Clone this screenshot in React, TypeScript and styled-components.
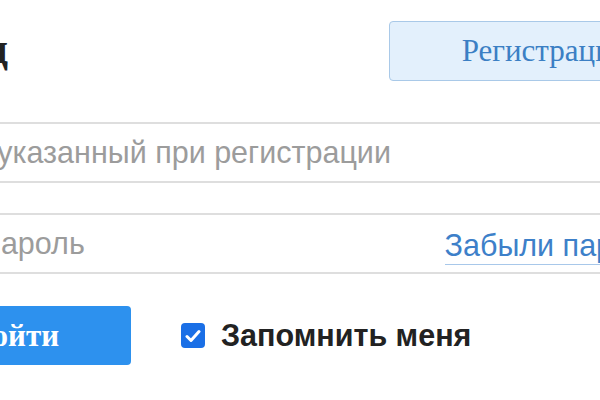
import styled, { createGlobalStyle } from "styled-components";

const GlobalStyle = createGlobalStyle`
  html, body {
    margin: 0;
    padding: 0;
    background: #ffffff;
  }
`;

const Viewport = styled.div`
  width: 600px;
  height: 400px;
  overflow: hidden;
`;

const Form = styled.form`
  width: 809px;
  margin-left: -110px;
  padding-top: 21px;
  display: flex;
  flex-direction: column;
`;

const Header = styled.div`
  display: flex;
  justify-content: space-between;
  align-items: center;
`;

const Title = styled.h1`
  margin: 0 0 6px 26px;
  font-family: "Liberation Serif", serif;
  font-size: 44px;
  font-weight: bold;
  color: #222222;
`;

const RegisterButton = styled.button`
  height: 60px;
  padding: 0 72px;
  background: #e3f0fc;
  border: 1px solid #a9c9e8;
  border-radius: 4px;
  font-family: "Liberation Serif", serif;
  font-size: 31px;
  color: #3b7fc4;
`;

const Field = styled.div<{ $gap: number }>`
  margin-top: ${(p) => p.$gap}px;
  height: 57px;
  display: flex;
  align-items: center;
  border: 2px solid #dedede;
  padding: 0 12px;
`;

const Input = styled.input`
  flex: 1;
  min-width: 0;
  border: none;
  outline: none;
  background: transparent;
  font-family: "Liberation Sans", Arial, sans-serif;
  font-size: 30.5px;
  color: #333333;
  padding: 0;

  &::placeholder {
    color: #9c9c9c;
  }
`;

const ForgotLink = styled.a`
  font-family: "Liberation Sans", Arial, sans-serif;
  font-size: 30.5px;
  color: #3d80c9;
  text-decoration: none;
  white-space: nowrap;
  border-bottom: 1px solid #a8c8ea;
  padding-bottom: 1px;
  margin-top: 6px;
  margin-right: 5px;
`;

const Actions = styled.div`
  margin-top: 32px;
  display: flex;
  align-items: center;
`;

const SubmitButton = styled.button`
  height: 59px;
  width: 241px;
  padding: 0 0 0 10px;
  background: #2d91ee;
  border: none;
  border-radius: 4px;
  font-family: "Liberation Serif", serif;
  font-size: 31px;
  font-weight: bold;
  color: #ffffff;
`;

const Remember = styled.label`
  margin-left: 50px;
  display: flex;
  align-items: center;
  gap: 16px;
  font-family: "Liberation Sans", Arial, sans-serif;
  font-size: 30.5px;
  font-weight: bold;
  color: #222222;
`;

const CheckBox = styled.span`
  width: 24px;
  height: 25px;
  border-radius: 4px;
  background: #1a6fe6;
  display: flex;
  align-items: center;
  justify-content: center;
`;

export default function App() {
  return (
    <>
      <GlobalStyle />
      <Viewport>
        <Form onSubmit={(e) => e.preventDefault()}>
          <Header>
            <Title>Вход</Title>
            <RegisterButton type="button">Регистрация</RegisterButton>
          </Header>
          <Field $gap={41}>
            <Input placeholder="Email, указанный при регистрации" />
          </Field>
          <Field $gap={30}>
            <Input type="password" placeholder="Свой пароль" />
            <ForgotLink href="#">Забыли пароль?</ForgotLink>
          </Field>
          <Actions>
            <SubmitButton type="submit">Войти</SubmitButton>
            <Remember>
              <CheckBox>
                <svg width="16" height="14" viewBox="0 0 16 14">
                  <path
                    d="M2 7.5 L6 11.5 L14 2.5"
                    fill="none"
                    stroke="#ffffff"
                    strokeWidth="3"
                    strokeLinecap="round"
                    strokeLinejoin="round"
                  />
                </svg>
              </CheckBox>
              Запомнить меня
            </Remember>
          </Actions>
        </Form>
      </Viewport>
    </>
  );
}
